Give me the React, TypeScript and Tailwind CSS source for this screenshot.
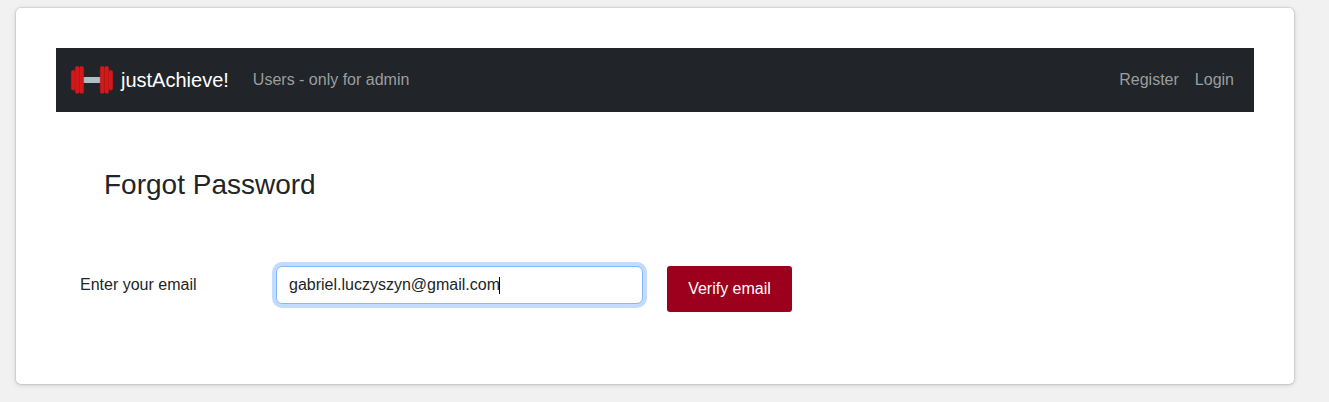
function Dumbbell() {
  return (
    <svg width="44" height="30" viewBox="0 0 44 30" className="block">
      <rect x="13" y="12" width="18" height="6" fill="#b0bec5" />
      <g fill="#d5191b" stroke="#b81719" strokeWidth="0.4">
        <rect x="1.2" y="5.2" width="4" height="20" rx="2" />
        <rect x="5.2" y="1.2" width="4.2" height="27.4" rx="2" />
        <rect x="9.5" y="1.2" width="4.2" height="27.4" rx="2" />
        <rect x="30.2" y="1.2" width="4.2" height="27.4" rx="2" />
        <rect x="34.6" y="1.2" width="4.2" height="27.4" rx="2" />
        <rect x="38.8" y="5.2" width="4" height="20" rx="2" />
      </g>
    </svg>
  );
}

function Navbar() {
  return (
    <nav className="flex h-16 items-center bg-[#212529] pr-5 pl-3.5 text-[#9b9d9e]">
      <a className="flex items-center">
        <Dumbbell />
        <span className="ml-[7px] text-[20px] leading-[30px] text-white">justAchieve!</span>
      </a>
      <a className="ml-6">Users - only for admin</a>
      <div className="ml-auto flex gap-4">
        <a>Register</a>
        <a>Login</a>
      </div>
    </nav>
  );
}

export default function App() {
  return (
    <div className="h-[402px] overflow-hidden bg-[#f1f1f1] pt-2 pl-4 font-['Liberation_Sans',Arial,sans-serif] text-base text-[#212529]">
      <main className="h-[376px] w-[1278px] rounded-[5px] bg-white px-10 pt-10 shadow-[0_0_1px_1px_rgba(0,0,0,0.08),0_1px_5px_rgba(0,0,0,0.16)]">
        <Navbar />
        <h1 className="mt-14 ml-12 text-[28px] leading-[34px]">Forgot Password</h1>
        <form className="mt-16 ml-6 flex items-start">
          <label className="w-[196px] pt-[7px]">Enter your email</label>
          <div
            role="textbox"
            className="flex h-[38px] w-[367px] items-center rounded-md border border-[#86b7fe] bg-white px-3 shadow-[0_0_0_4px_#c2dbff]"
          >
            <span>gabriel.luczyszyn@gmail.com</span>
            <span className="-ml-px h-[17px] w-px bg-black" />
          </div>
          <button
            type="button"
            className="ml-6 h-[46px] w-[125px] rounded-[3px] bg-[#9c001c] text-white"
          >
            Verify email
          </button>
        </form>
      </main>
    </div>
  );
}
